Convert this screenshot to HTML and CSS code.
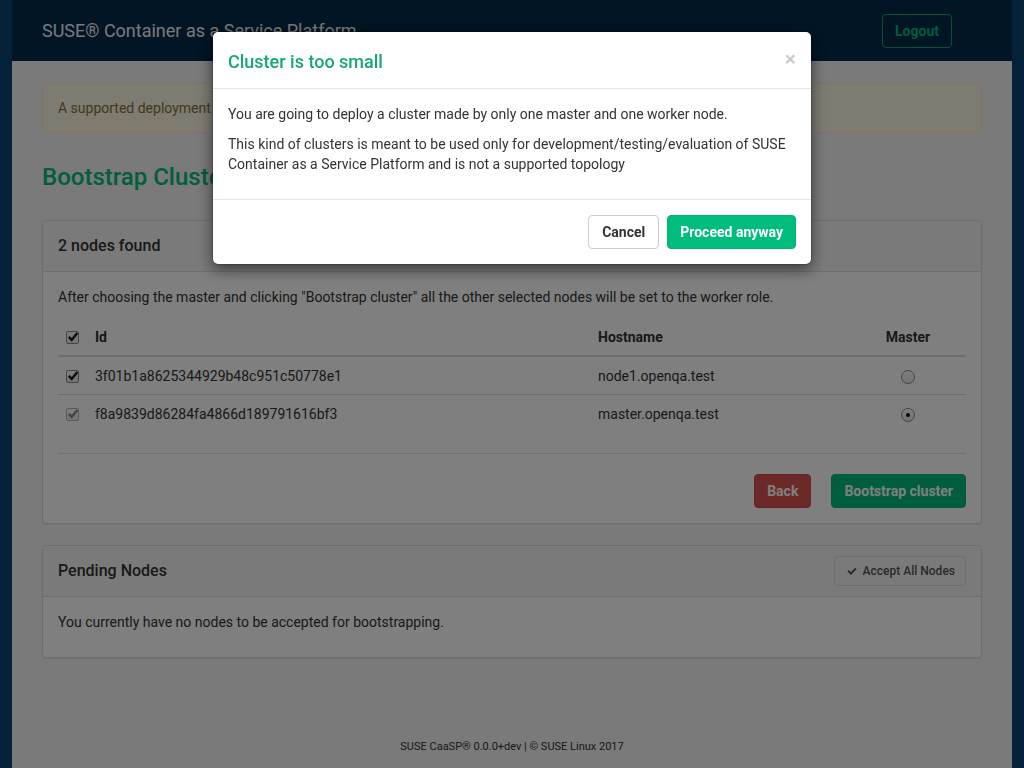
FILE: index.html
```html
<!DOCTYPE html>
<html lang="en">
<head>
<meta charset="utf-8">
<title>SUSE CaaSP</title>
<link rel="stylesheet" href="styles.css">
</head>
<body>
<div class="page">
  <nav class="navbar">
    <span class="brand">SUSE® Container as a Service Platform</span>
    <a class="btn btn-outline">Logout</a>
  </nav>
  <main class="main">
    <div class="alert">A supported deployment requires at least one master and two worker nodes, for a minimum of three nodes.</div>
    <h1 class="page-title">Bootstrap Cluster</h1>

    <section class="panel">
      <div class="panel-heading"><h3>2 nodes found</h3></div>
      <div class="panel-body">
        <p class="intro">After choosing the master and clicking "Bootstrap cluster" all the other selected nodes will be set to the worker role.</p>
        <table class="nodes">
          <thead>
            <tr>
              <th class="col-check"><span class="cb checked"><svg viewBox="0 0 13 13"><path d="M2.6 6.4l2.7 2.8 5.2-6.4"/></svg></span></th>
              <th class="col-id">Id</th>
              <th class="col-host">Hostname</th>
              <th class="col-master">Master</th>
            </tr>
          </thead>
          <tbody>
            <tr>
              <td class="col-check"><span class="cb checked"><svg viewBox="0 0 13 13"><path d="M2.6 6.4l2.7 2.8 5.2-6.4"/></svg></span></td>
              <td>3f01b1a8625344929b48c951c50778e1</td>
              <td>node1.openqa.test</td>
              <td class="col-master"><span class="radio"></span></td>
            </tr>
            <tr>
              <td class="col-check"><span class="cb checked disabled"><svg viewBox="0 0 13 13"><path d="M2.6 6.4l2.7 2.8 5.2-6.4"/></svg></span></td>
              <td>f8a9839d86284fa4866d189791616bf3</td>
              <td>master.openqa.test</td>
              <td class="col-master"><span class="radio on"></span></td>
            </tr>
          </tbody>
        </table>
        <hr class="sep">
        <div class="actions">
          <a class="btn btn-danger">Back</a>
          <a class="btn btn-primary">Bootstrap cluster</a>
        </div>
      </div>
    </section>

    <section class="panel">
      <div class="panel-heading heading-flex">
        <h3>Pending Nodes</h3>
        <a class="btn btn-default btn-sm"><svg class="fa-check" viewBox="0 0 16 16"><path d="M2 8.6l1.8-1.8 2.8 2.8 5.6-5.8 1.8 1.8-7.4 7.6z"/></svg>Accept All Nodes</a>
      </div>
      <div class="panel-body">
        <p class="empty">You currently have no nodes to be accepted for bootstrapping.</p>
      </div>
    </section>

    <footer class="footer">SUSE CaaSP® 0.0.0+dev | © SUSE Linux 2017</footer>
  </main>
</div>

<div class="backdrop"></div>
<div class="modal" role="dialog">
  <div class="modal-header">
    <h4 class="modal-title">Cluster is too small</h4>
    <span class="close">×</span>
  </div>
  <div class="modal-body">
    <p>You are going to deploy a cluster made by only one master and one worker node.</p>
    <p>This kind of clusters is meant to be used only for development/testing/evaluation of SUSE Container as a Service Platform and is not a supported topology</p>
  </div>
  <div class="modal-footer">
    <a class="btn btn-white">Cancel</a>
    <a class="btn btn-primary">Proceed anyway</a>
  </div>
</div>
</body>
</html>
```

FILE: styles.css
```css
* { box-sizing: border-box; }

html, body {
  margin: 0;
  height: 100%;
}

body {
  background: #0d4576;
  font-family: Roboto, "Liberation Sans", sans-serif;
  font-size: 14px;
  line-height: 20px;
  color: #333;
  overflow: hidden;
}

.page {
  width: 1000px;
  margin: 0 auto;
  min-height: 768px;
  display: flex;
  flex-direction: column;
}

.navbar {
  height: 61px;
  background: #022b4a;
  display: flex;
  align-items: center;
  justify-content: space-between;
  padding: 0 60px 0 30px;
}

.brand {
  color: #f2f2f2;
  font-size: 18px;
  line-height: 24px;
}

.btn {
  display: inline-block;
  font-size: 14px;
  font-weight: 700;
  line-height: 20px;
  padding: 6px 12px;
  border: 1px solid transparent;
  border-radius: 4px;
  text-decoration: none;
  white-space: nowrap;
}

.btn-outline {
  color: #00b877;
  border-color: #00a86b;
  background: transparent;
}

.btn-primary {
  background: #00bd7e;
  border-color: #00b477;
  color: #fff;
}

.btn-danger {
  background: #d9534f;
  border-color: #cf4642;
  color: #fff;
}

.btn-white {
  background: #fff;
  border-color: #ccc;
  color: #333;
  padding: 6px 13px;
}

.btn-default {
  background: #f5f5f5;
  border-color: #ddd;
  color: #555;
}

.btn-sm {
  font-size: 12px;
  line-height: 18px;
  padding: 5px 10px 5px 11px;
  font-weight: 500;
  display: inline-flex;
  align-items: center;
  gap: 5px;
}

.fa-check {
  width: 12px;
  height: 12px;
  fill: #555;
}

.main {
  flex: 1;
  background: #f4f4f4;
  padding: 22px 30px 0;
  display: flex;
  flex-direction: column;
}

.alert {
  background: #fcf8e3;
  border: 1px solid #faebcc;
  color: #8a6d3b;
  border-radius: 4px;
  padding: 14px 15px;
  white-space: nowrap;
  overflow: hidden;
}

.page-title {
  font-size: 24px;
  line-height: 28px;
  font-weight: 500;
  color: #00bc7b;
  margin: 30px 0 29px;
}

.panel {
  background: #fff;
  border: 1px solid #ddd;
  border-radius: 4px;
  box-shadow: 0 1px 1px rgba(0, 0, 0, 0.05);
  margin-bottom: 21px;
}

.panel-heading {
  background: #f5f5f5;
  border-bottom: 1px solid #ddd;
  border-radius: 3px 3px 0 0;
  height: 51px;
  padding: 0 15px;
  display: flex;
  align-items: center;
}

.heading-flex {
  justify-content: space-between;
}

.panel-heading h3 {
  margin: 0;
  font-size: 16px;
  font-weight: 500;
  color: #333;
}

.panel-body {
  padding: 15px;
}

.intro {
  margin: 0 0 12px;
}

.empty {
  margin: 0 0 10px;
}

.nodes {
  width: 100%;
  border-collapse: collapse;
  margin-bottom: 21px;
}

.nodes th,
.nodes td {
  text-align: left;
  vertical-align: middle;
  line-height: 20px;
}

.nodes th {
  padding: 8px;
  font-weight: 700;
  border-bottom: 2px solid #ddd;
}

.nodes td {
  padding: 9px 8px 8px;
  border-top: 1px solid #ddd;
}

.nodes tbody tr:first-child td {
  border-top: 0;
}

.col-check { width: 29px; }
.col-id { width: 503px; }
.col-host { width: 260px; }
.nodes .col-master { text-align: center; }

.cb {
  display: inline-block;
  width: 13px;
  height: 13px;
  border: 1px solid #8a8a8a;
  border-radius: 2px;
  background: linear-gradient(#fdfdfd, #e9e9e9);
  vertical-align: -2px;
  position: relative;
}

.cb svg {
  position: absolute;
  left: -1px;
  top: -2px;
  width: 14px;
  height: 14px;
  fill: none;
  stroke: #1a1a1a;
  stroke-width: 2.2;
}

.cb.disabled {
  border-color: #b3b3b3;
}

.cb.disabled svg {
  stroke: #888;
}

.radio {
  display: inline-block;
  width: 14px;
  height: 14px;
  border-radius: 50%;
  border: 1px solid #8a8a8a;
  background: linear-gradient(#fdfdfd, #e6e6e6);
  vertical-align: -3px;
  position: relative;
}

.radio.on::after {
  content: "";
  position: absolute;
  left: 4px;
  top: 4px;
  width: 4px;
  height: 4px;
  border-radius: 50%;
  background: #111;
}

.sep {
  border: 0;
  border-top: 1px solid #e4e4e4;
  margin: 0 0 20px;
}

.actions {
  display: flex;
  justify-content: flex-end;
  gap: 20px;
}

.footer {
  margin-top: auto;
  text-align: center;
  font-size: 11px;
  line-height: 15px;
  padding-bottom: 14px;
  color: #333;
}

.backdrop {
  position: fixed;
  inset: 0;
  background: rgba(0, 0, 0, 0.5);
}

.modal {
  position: fixed;
  top: 31px;
  left: 212px;
  width: 600px;
  background: #fff;
  border: 1px solid rgba(0, 0, 0, 0.2);
  border-radius: 6px;
  box-shadow: 0 5px 15px rgba(0, 0, 0, 0.5);
  background-clip: padding-box;
}

.modal-header {
  padding: 17px 15px 13px;
  border-bottom: 1px solid #e5e5e5;
  display: flex;
  justify-content: space-between;
  align-items: center;
}

.modal-title {
  margin: 0;
  font-size: 18px;
  line-height: 26px;
  font-weight: 500;
  color: #15a870;
}

.close {
  font-size: 21px;
  font-weight: 700;
  color: #000;
  opacity: 0.2;
  line-height: 1;
  margin: -6px 0 0;
}

.modal-body {
  padding: 15px;
}

.modal-body p {
  margin: 0 0 10px;
}

.modal-footer {
  padding: 15px;
  border-top: 1px solid #e5e5e5;
  display: flex;
  justify-content: flex-end;
  gap: 8px;
}
```
